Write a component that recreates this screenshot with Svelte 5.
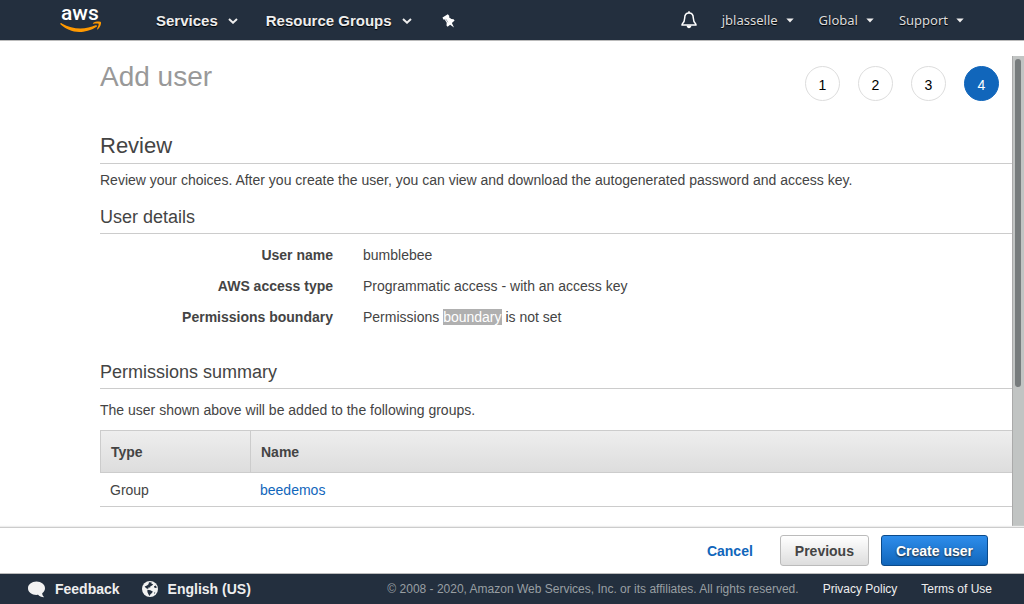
<script>
  const menus = ['Services', 'Resource Groups'];
  const accountMenus = ['jblasselle', 'Global', 'Support'];
  const steps = [1, 2, 3, 4];
  const current = 4;
  const groups = [{ type: 'Group', name: 'beedemos' }];
</script>

<div class="page">
  <header class="topbar">
    <a class="logo" href="#home" aria-label="AWS home">
      <svg width="42" height="38" viewBox="0 -4 42 38">
        <text x="1" y="15" class="logo-text">aws</text>
        <path class="smile" d="M0.3 18.6C0.6 18 1.2 18 1.8 18.4C13 25 26 24.5 35.5 20.3C36.8 19.8 37.8 20.9 36.6 21.8C31 25.6 24.5 27 19.3 27C12 27 5.400 23.800 0.600 19.500Z" />
        <path class="smile" d="M33 18.100C35.500 16.300 40.200 16.300 40.900 17.200C41.500 18.100 40.300 22.300 37.800 24.300C37.300 24.700 36.900 24.400 37.100 23.900C37.800 22.300 39.100 19.300 38.600 18.800C38 18.200 35.200 18.500 33.500 18.700C32.900 18.800 32.700 18.400 33 18.100Z" />
      </svg>
    </a>
    <nav class="services">
      {#each menus as label}
        <button class="menu strong" type="button">
          {label}
          <svg width="10" height="6" viewBox="0 0 10 6"><path d="M1 1L5 4.700L9 1" fill="none" stroke="#eee" stroke-width="2" /></svg>
        </button>
      {/each}
      <button class="menu" type="button" aria-label="Pin shortcuts">
        <svg width="16" height="15" viewBox="-2 0 16 15">
          <path fill="#fff" d="M0.500 3.500L5.800 0.200L7.400 2L7 3.200L9.400 5L11.600 5.200L12.600 6.400L9.900 8.900L12 13.500L8.100 10.700L5.600 12.800L4.500 11.500L4.700 8.800L2.700 5.500L1.300 5.500Z" />
          <path d="M3.700 4.900L5.900 8.300" stroke="#8c949e" stroke-width="0.800" />
        </svg>
      </button>
    </nav>
    <nav class="account">
      <button class="menu" type="button" aria-label="Notifications">
        <svg width="16" height="18" viewBox="0 0 16 18">
          <path d="M8 2C4.900 2 3.700 4.300 3.700 7C3.700 10.500 2.700 11.800 1.100 13.300V14H14.900V13.300C13.300 11.800 12.300 10.500 12.300 7C12.300 4.300 11.100 2 8 2Z" fill="none" stroke="#fff" stroke-width="1.500" />
          <path d="M7.200 0.300H8.800V2H7.200ZM5.600 14.500H10.400C10.200 18 5.800 18 5.600 14.500Z" fill="#fff" />
        </svg>
      </button>
      {#each accountMenus as label}
        <button class="menu" type="button">
          {label}
          <svg width="8" height="5" viewBox="0 0 8 5"><path d="M0.300 0.500H7.700L4 4.500Z" fill="#eee" /></svg>
        </button>
      {/each}
    </nav>
  </header>

  <main>
    <div class="content">
      <div class="title-row">
        <h1>Add user</h1>
        <ol class="steps">
          {#each steps as step}
            <li class:active={step === current} aria-current={step === current ? 'step' : undefined}>{step}</li>
          {/each}
        </ol>
      </div>

      <h2>Review</h2>
      <p class="intro">Review your choices. After you create the user, you can view and download the autogenerated password and access key.</p>

      <h3>User details</h3>
      <dl>
        <dt>User name</dt>
        <dd>bumblebee</dd>
        <dt>AWS access type</dt>
        <dd>Programmatic access - with an access key</dd>
        <dt>Permissions boundary</dt>
        <dd>Permissions <mark>boundary</mark> is not set</dd>
      </dl>

      <h3>Permissions summary</h3>
      <p class="summary">The user shown above will be added to the following groups.</p>
      <table>
        <thead>
          <tr><th class="type">Type</th><th>Name</th></tr>
        </thead>
        <tbody>
          {#each groups as group}
            <tr><td>{group.type}</td><td><a href="#group">{group.name}</a></td></tr>
          {/each}
        </tbody>
      </table>
    </div>
    <div class="scrollbar"><div class="thumb"></div></div>
  </main>

  <div class="actions">
    <a class="cancel" href="#cancel">Cancel</a>
    <button class="btn" type="button">Previous</button>
    <button class="btn primary" type="button">Create user</button>
  </div>

  <footer>
    <a class="foot-strong" href="#feedback">
      <svg width="17" height="17" viewBox="0 0 17 17"><path fill="#f2f2f2" d="M8.500 0.500C13.300 0.500 17 3.500 17 7.200C17 9.300 15.900 11 14.200 12.200C14.300 13.800 15 15 16.100 16.200C13.300 16.200 11.300 15.200 10.100 13.800C4.500 14.500 0 11.500 0 7.200C0 3.500 3.700 0.500 8.500 0.500Z" /></svg>
      Feedback
    </a>
    <button class="foot-strong" type="button">
      <svg width="16" height="16" viewBox="0 0 16 16">
        <circle cx="8" cy="8" r="8" fill="#f2f2f2" />
        <path fill="#232f3e" d="M7 1.200L9.800 1.400L9.200 2.600L11.200 3.200L9.800 4.700L8.600 5L8.200 6.400L6.400 6.600L6.200 8L4.200 7.200L2.600 5.400L5 4.600L6.500 3.200ZM12 5.200L13.800 4.600L14.900 6.500L13.600 7L12.200 6.400ZM5.400 8.700L8.400 9.300L10.800 10.400L10 12L8.400 13.300L7.800 14.900L6.400 13.200L5.400 11ZM12 12L13.400 10.800L12.600 13Z" />
      </svg>
      English (US)
    </button>
    <small>© 2008 - 2020, Amazon Web Services, Inc. or its affiliates. All rights reserved.</small>
    <a href="#privacy">Privacy Policy</a>
    <a href="#terms">Terms of Use</a>
  </footer>
</div>

<style>
  :global(body) {
    margin: 0;
    background: #fff;
  }
  .page {
    display: flex;
    flex-direction: column;
    height: 100vh;
    font: 14px/20px "Liberation Sans", Arial, sans-serif;
    color: #444;
  }
  svg {
    display: block;
    flex: none;
  }
  a {
    color: #1166bb;
    text-decoration: none;
  }
  button {
    font: inherit;
    cursor: pointer;
  }
  .topbar {
    display: flex;
    align-items: center;
    flex: none;
    height: 40px;
    padding: 0 60px;
    background: #232f3e;
    border-bottom: 1px solid #bbb;
  }
  .logo {
    margin-right: 54px;
  }
  .logo-text {
    font: 500 21px Roboto, sans-serif;
    fill: #fff;
  }
  .smile {
    fill: #f90;
  }
  .services,
  .account {
    display: flex;
    align-items: center;
    gap: 28px;
  }
  .services {
    padding-top: 2px;
  }
  .account {
    gap: 25px;
    margin-left: auto;
    font: 13px/20px "Noto Sans", sans-serif;
  }
  .menu {
    display: flex;
    align-items: center;
    gap: 8px;
    padding: 0;
    border: 0;
    background: none;
    color: #ddd;
    text-shadow: 0 1px 1px #000;
  }
  .strong {
    gap: 10px;
    font-size: 15px;
    font-weight: bold;
    color: #eee;
  }
  main {
    display: flex;
    flex: 1;
    min-height: 0;
    padding-top: 15px;
  }
  .content {
    flex: 1;
    min-width: 0;
    overflow: hidden;
    padding-left: 100px;
  }
  .title-row {
    display: flex;
    justify-content: space-between;
    padding: 4px 13px 32px 0;
  }
  h1,
  h2,
  h3 {
    margin: 0;
    font-weight: normal;
  }
  h1 {
    font-size: 28px;
    line-height: 34px;
    color: #999;
  }
  .steps {
    display: flex;
    gap: 18px;
    margin: 0;
    padding: 6px 0 0;
    list-style: none;
  }
  .steps li {
    box-sizing: border-box;
    width: 35px;
    height: 35px;
    border: 1px solid #ddd;
    border-radius: 50%;
    line-height: 36px;
    text-align: center;
    color: #000;
  }
  .steps .active {
    border-color: #1166bb;
    background: #1166bb;
    color: #fff;
  }
  h2 {
    padding-bottom: 4px;
    border-bottom: 1px solid #ccc;
    font-size: 22px;
    line-height: 26px;
  }
  h3 {
    padding-bottom: 5px;
    border-bottom: 1px solid #ccc;
    font-size: 18px;
    line-height: 22px;
  }
  .intro {
    margin: 6px 0 16px;
  }
  dl {
    display: grid;
    grid-template-columns: 233px 1fr;
    gap: 11px 30px;
    margin: 11px 0 34px;
  }
  dt {
    font-weight: bold;
    text-align: right;
  }
  dd {
    margin: 0;
  }
  mark {
    background: #b0b0b0;
    color: #fff;
  }
  .summary {
    margin: 11px 0 10px;
  }
  table {
    width: 100%;
    border-collapse: separate;
    border-spacing: 0;
    text-align: left;
  }
  th {
    padding: 11px 10px 10px;
    border: solid #ccc;
    border-width: 1px 0 1px 1px;
    background: linear-gradient(#eee, #ddd);
  }
  .type {
    width: 129px;
  }
  td {
    padding: 7px 10px 6px 10px;
    border-bottom: 1px solid #ccc;
  }
  .scrollbar {
    flex: none;
    width: 6px;
    padding: 3px 3px 0 2px;
    border-left: 1px solid #aaa;
    background: #c1c4c3;
  }
  .thumb {
    height: 70%;
    border-radius: 3px;
    background: #777c7d;
  }
  .actions {
    display: flex;
    align-items: center;
    justify-content: flex-end;
    gap: 12px;
    flex: none;
    padding: 7px 36px;
    border-top: 1px solid #ccc;
    box-shadow: 0 -1px 1px #eee;
    font-weight: bold;
  }
  .cancel {
    margin-right: 15px;
  }
  .btn {
    height: 31px;
    padding: 0 14px;
    border: 1px solid #bbb;
    border-radius: 3px;
    background: linear-gradient(#fff, #ddd);
    color: #444;
  }
  .primary {
    border-color: #0b4a8a;
    background: linear-gradient(#2e8deb, #1166bb);
    color: #fff;
    text-shadow: 0 1px 2px #222;
  }
  footer {
    display: flex;
    align-items: center;
    flex: none;
    height: 30px;
    padding: 0 32px 0 28px;
    border-top: 1px solid #bbb;
    background: #232f3e;
    font-size: 12px;
  }
  footer a {
    margin-left: 24px;
    color: #eee;
  }
  footer .foot-strong {
    display: flex;
    align-items: center;
    gap: 10px;
    margin: 0 22px 0 0;
    padding: 0;
    border: 0;
    background: none;
    font-size: 14px;
    font-weight: bold;
    color: #eee;
  }
  small {
    margin-left: auto;
    font-size: 12px;
    color: #999fa3;
  }
</style>
